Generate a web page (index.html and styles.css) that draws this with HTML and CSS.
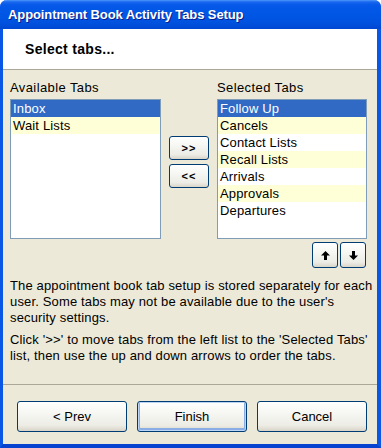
FILE: index.html
```html
<!DOCTYPE html>
<html lang="en">
<head>
  <meta charset="utf-8"/>
  <title>Appointment Book Activity Tabs Setup</title>
  <link rel="stylesheet" href="styles.css">
</head>
<body>
	<div class="window">
		<div class="titlebar">
			<span class="title">Appointment Book Activity Tabs Setup</span>
		</div>

		<div class="header">
			<h1>Select tabs...</h1>
		</div>

		<div class="content">
			<div class="pickers">
				<div class="picker picker-left">
					<div class="label">Available Tabs</div>
					<ul class="list">
						<li class="selected">Inbox</li>
						<li class="alt">Wait Lists</li>
					</ul>
				</div>

				<div class="movers">
					<button class="btn btn-small">&gt;&gt;</button>
					<button class="btn btn-small">&lt;&lt;</button>
				</div>

				<div class="picker picker-right">
					<div class="label">Selected Tabs</div>
					<ul class="list">
						<li class="selected">Follow Up</li>
						<li class="alt">Cancels</li>
						<li>Contact Lists</li>
						<li class="alt">Recall Lists</li>
						<li>Arrivals</li>
						<li class="alt">Approvals</li>
						<li>Departures</li>
					</ul>
					<div class="order">
						<button class="btn btn-arrow" title="Move up">
							<svg width="9" height="9" viewBox="0 0 9 9"><path d="M4.5 0 L9 4.5 L6 4.5 L6 9 L3 9 L3 4.5 L0 4.5 Z" fill="#000"/></svg>
						</button>
						<button class="btn btn-arrow" title="Move down">
							<svg width="9" height="9" viewBox="0 0 9 9"><path d="M3 0 L6 0 L6 4.5 L9 4.5 L4.5 9 L0 4.5 L3 4.5 Z" fill="#000"/></svg>
						</button>
					</div>
				</div>
			</div>

			<p class="note">The appointment book tab setup is stored separately for each user. Some tabs may not be available due to the user's security settings.</p>
			<p class="note">Click '&gt;&gt;' to move tabs from the left list to the 'Selected Tabs' list, then use the up and down arrows to order the tabs.</p>
		</div>

		<div class="footer">
			<button class="btn btn-wide">&lt; Prev</button>
			<button class="btn btn-wide btn-default">Finish</button>
			<button class="btn btn-wide">Cancel</button>
		</div>
	</div>
</body>
</html>
```

FILE: styles.css
```css
	body {
		margin: 0;
		background-color: #FFFFFF;
		font-family: "Liberation Sans", Arial, sans-serif;
		font-size: 13px;
		letter-spacing: 0.15px;
		color: #000000;
	}

	.window {
		width: 381px;
		height: 448px;
		box-sizing: border-box;
		display: flex;
		flex-direction: column;
		background-color: #ECE9D8;
		border-left: 3px solid #0A57E6;
		border-right: 4px solid #0A57E6;
		border-bottom: 4px solid #0743CF;
		border-radius: 7px 7px 0 0;
	}

	.titlebar {
		height: 29px;
		margin: 0 -4px 0 -3px;
		border-radius: 7px 7px 0 0;
		background: linear-gradient(180deg, #4A98FA 0, #1A67EE 2px, #0558E8 5px, #0056E4 16px, #0050DD 24px, #0046D0 29px);
		display: flex;
		align-items: center;
		padding-left: 8px;
	}

	.title {
		color: #FFFFFF;
		font-weight: bold;
		font-size: 13px;
		letter-spacing: -0.1px;
		text-shadow: 1px 1px 0 #0A1E8C;
	}

	.header {
		height: 41px;
		box-sizing: border-box;
		background-color: #FFFFFF;
		border-bottom: 1px solid #ACA899;
		display: flex;
		align-items: center;
		padding-left: 22px;
	}

	h1 {
		margin: 0;
		font-size: 14px;
		font-weight: bold;
		letter-spacing: 0.3px;
	}

	.content {
		flex: 1;
		padding: 10px 10px 0 7px;
	}

	.pickers {
		display: flex;
	}

	.label {
		line-height: 16px;
		margin-bottom: 3px;
		letter-spacing: 0.4px;
	}

	.list {
		list-style: none;
		margin: 0;
		padding: 0;
		height: 140px;
		box-sizing: border-box;
		border: 1px solid #7F9DB9;
		background-color: #FFFFFF;
	}

	.picker-left .list {
		width: 151px;
	}

	.picker-right .list {
		width: 150px;
	}

	.list li {
		height: 17px;
		line-height: 17px;
		padding-left: 2px;
	}

	.list li.alt {
		background-color: #FFFFD7;
	}

	.list li.selected {
		background-color: #316AC5;
		color: #FFFFFF;
	}

	.movers {
		display: flex;
		flex-direction: column;
		gap: 4px;
		margin: 56px 8px 0 8px;
	}

	.order {
		display: flex;
		justify-content: flex-end;
		gap: 2px;
		margin-top: 3px;
		padding-right: 1px;
	}

	.btn {
		font-family: "Liberation Sans", Arial, sans-serif;
		font-size: 13px;
		color: #000000;
		border: 1px solid #003C74;
		border-radius: 3px;
		background: linear-gradient(180deg, #FFFFFF 0, #F6F6F2 40%, #EDEDE6 80%, #D9D4C8 100%);
		padding: 0;
		box-sizing: border-box;
	}

	.btn-small {
		width: 40px;
		height: 24px;
		font-size: 11px;
		font-weight: bold;
		letter-spacing: 1px;
	}

	.btn-arrow {
		width: 26px;
		height: 26px;
		display: flex;
		align-items: center;
		justify-content: center;
	}

	.note {
		margin: 10px -6px 0 0;
		line-height: 16px;
	}

	.note + .note {
		margin-top: 6px;
	}

	.footer {
		height: 60px;
		box-sizing: border-box;
		border-top: 1px solid #ACA899;
		display: flex;
		justify-content: space-between;
		align-items: flex-start;
		padding: 16px 10px 0 14px;
	}

	.btn-wide {
		width: 110px;
		height: 31px;
	}

	.btn-default {
		box-shadow: inset 0 0 0 1px #BCD4F6, inset 0 -1px 0 2px #89ADE4;
	}
```
